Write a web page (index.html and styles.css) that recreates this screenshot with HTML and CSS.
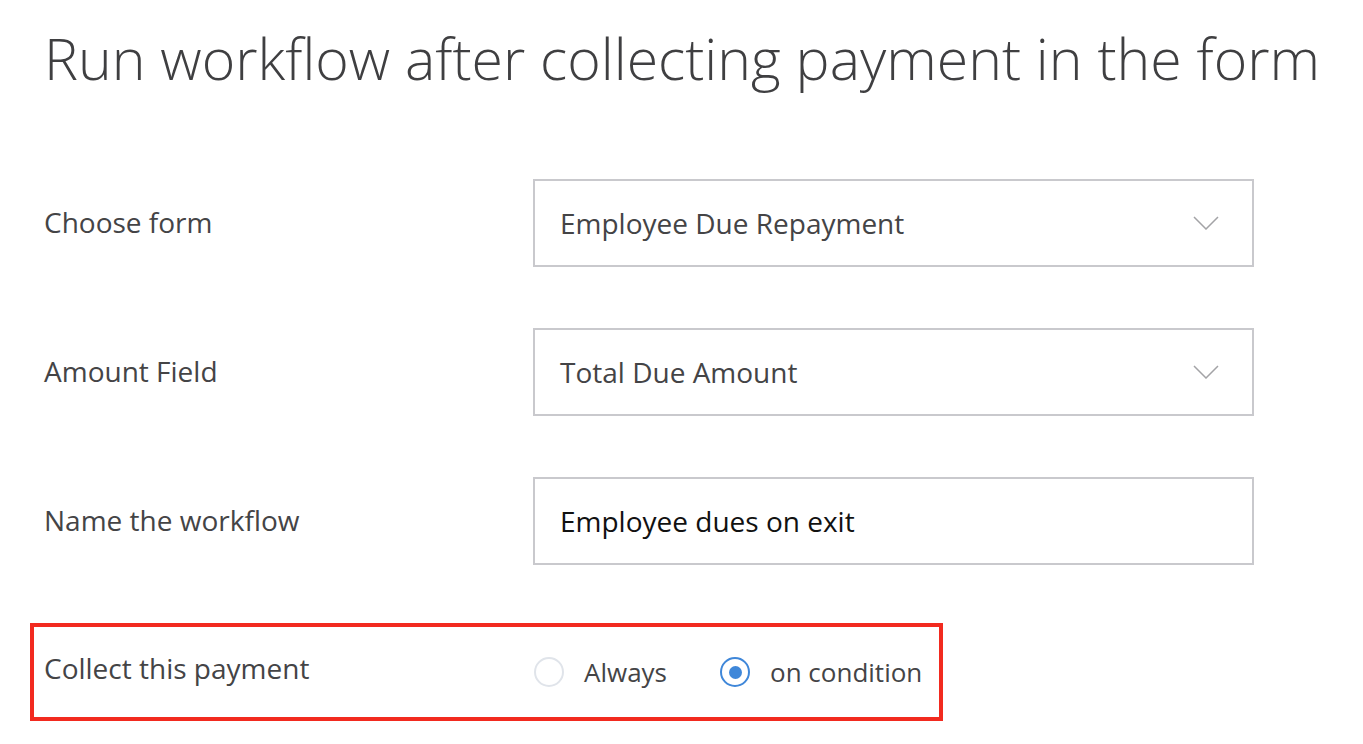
FILE: index.html
```html
<!DOCTYPE html>
<html>
<head>
<meta charset="utf-8">
<link rel="stylesheet" href="styles.css">
</head>
<body>
<div class="page">
  <h1 class="title">Run workflow after collecting payment in the form</h1>
  <div class="rows">
    <div class="row">
      <div class="label">Choose form</div>
      <div class="field select">
        <span class="value">Employee Due Repayment</span>
        <svg class="chev" width="26" height="14" viewBox="0 0 26 14"><path d="M1 1 L13 13 L25 1" fill="none" stroke="#a3a3a6" stroke-width="1.5"/></svg>
      </div>
    </div>
    <div class="row">
      <div class="label">Amount Field</div>
      <div class="field select">
        <span class="value">Total Due Amount</span>
        <svg class="chev" width="26" height="14" viewBox="0 0 26 14"><path d="M1 1 L13 13 L25 1" fill="none" stroke="#a3a3a6" stroke-width="1.5"/></svg>
      </div>
    </div>
    <div class="row">
      <div class="label">Name the workflow</div>
      <div class="field">
        <span class="value input">Employee dues on exit</span>
      </div>
    </div>
    <div class="row highlight">
      <div class="label">Collect this payment</div>
      <div class="radios">
        <label class="radio"><span class="circle"></span><span class="rtext">Always</span></label>
        <label class="radio checked"><span class="circle"><span class="dot"></span></span><span class="rtext">on condition</span></label>
      </div>
    </div>
  </div>
</div>
</body>
</html>
```
FILE: styles.css
```css
html, body {
  margin: 0;
  padding: 0;
  background: #ffffff;
}
body {
  font-family: "Open Sans", "Lato", sans-serif;
  color: #444446;
}
.page {
  padding-left: 44px;
  padding-top: 22px;
}
.title {
  margin: 0;
  font-weight: 300;
  font-size: 57.2px;
  line-height: 72px;
  color: #3f3f41;
}
.rows {
  display: flex;
  flex-direction: column;
  gap: 61px;
  margin-top: 85px;
}
.row {
  display: grid;
  grid-template-columns: 489px 721px;
  align-items: center;
  height: 88px;
}
.label {
  font-size: 28px;
  color: #444446;
  position: relative;
  top: -1px;
}
.field {
  box-sizing: border-box;
  height: 88px;
  border: 2px solid #c9c9cd;
  display: flex;
  align-items: center;
  justify-content: space-between;
  padding-left: 25px;
  padding-right: 33px;
}
.value {
  font-size: 28px;
  color: #444446;
}
.value.input {
  color: #111111;
}
.chev {
  display: block;
}
.highlight {
  margin-left: -14px;
  width: 913px;
  box-sizing: border-box;
  height: 98px;
  border: 4px solid #f22a1f;
  padding-left: 10px;
  grid-template-columns: 489px auto;
  margin-top: -3px;
}
.highlight .label {
  top: -4px;
}
.radios {
  display: flex;
  align-items: center;
  gap: 53px;
  margin-left: 1px;
}
.radio {
  display: flex;
  align-items: center;
  gap: 20px;
}
.circle {
  box-sizing: border-box;
  width: 30px;
  height: 30px;
  border-radius: 50%;
  border: 2px solid #e0e4ea;
  display: flex;
  align-items: center;
  justify-content: center;
}
.checked .circle {
  border-color: #3f87d9;
}
.dot {
  width: 13px;
  height: 13px;
  border-radius: 50%;
  background: #3f87d9;
}
.rtext {
  font-size: 26px;
  color: #444446;
}
```
